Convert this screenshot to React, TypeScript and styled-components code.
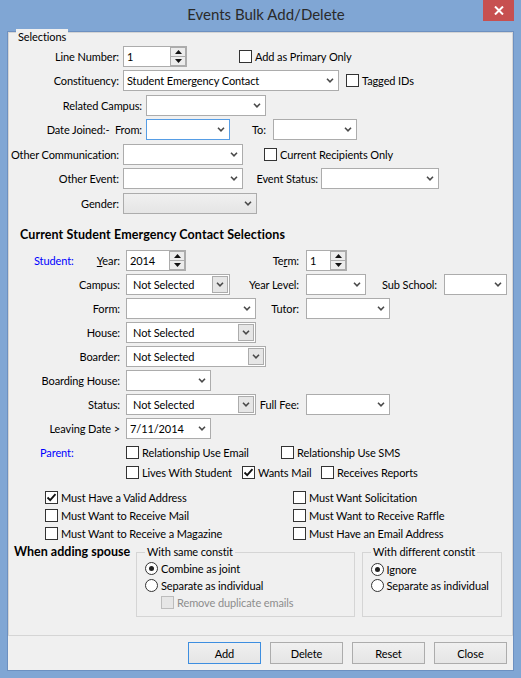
import React from 'react'
import styled, { createGlobalStyle } from 'styled-components'

const GlobalStyle = createGlobalStyle`
  html, body { margin: 0; padding: 0; background: #80a6d4; }
  body { font-family: Lato, "Noto Sans", sans-serif; font-size: 11px; letter-spacing: -0.1px; color: #000; }
  * { box-sizing: border-box; }
`

const Window = styled.div`
  width: 521px;
  height: 678px;
  background: #80a6d4;
  display: flex;
  flex-direction: column;
`

const TitleBar = styled.div`
  position: relative;
  height: 31px;
  flex: none;
  display: flex;
  align-items: center;
  justify-content: center;
  padding: 0 0 3px 11px;
  font-size: 15px;
  letter-spacing: 0;
  color: #2a2a2a;
`

const CloseButton = styled.div`
  position: absolute;
  top: 0;
  right: 7px;
  width: 31px;
  height: 21px;
  background: #c75050;
  display: flex;
  align-items: center;
  justify-content: center;
`

const Client = styled.div`
  flex: 1;
  margin: 0 7px 7px 7px;
  border: 1px solid #6d90c0;
  background: #f0f0f0;
  display: flex;
  flex-direction: column;
`

const GroupBox = styled.div<{ $w?: number; $h: number }>`
  position: relative;
  flex: none;
  width: ${({ $w }) => ($w ? `${$w}px` : 'auto')};
  height: ${({ $h }) => $h}px;
  border: 1px solid #d5d5d5;
`

const Legend = styled.span<{ $top: number; $left: number }>`
  position: absolute;
  top: ${({ $top }) => $top}px;
  left: ${({ $left }) => $left}px;
  padding: 0 2px;
  line-height: 16px;
  background: #f0f0f0;
  white-space: nowrap;
`

const Content = styled.div<{ $pt: number; $pl?: number }>`
  display: flex;
  flex-direction: column;
  padding-top: ${({ $pt }) => $pt}px;
  padding-left: ${({ $pl }) => $pl ?? 0}px;
`

const Row = styled.div<{ $h?: number; $mt?: number; $pl?: number; $top?: boolean }>`
  display: flex;
  align-items: ${({ $top }) => ($top ? 'flex-start' : 'center')};
  flex: none;
  height: ${({ $h }) => $h ?? 24}px;
  margin-top: ${({ $mt }) => $mt ?? 0}px;
  padding-left: ${({ $pl }) => $pl ?? 0}px;
`

const Label = styled.span<{ $w: number; $pr?: number; $pl?: number; $left?: boolean; $color?: string }>`
  flex: none;
  display: flex;
  justify-content: ${({ $left }) => ($left ? 'flex-start' : 'flex-end')};
  width: ${({ $w }) => $w}px;
  padding-right: ${({ $pr }) => $pr ?? 4}px;
  padding-left: ${({ $pl }) => $pl ?? 0}px;
  color: ${({ $color }) => $color ?? '#000'};
  white-space: nowrap;
`

const SplitLabel = styled(Label)`
  justify-content: space-between;
`

const Blue = styled.span`
  color: #0000ff;
`

const SectionTitle = styled.div`
  flex: none;
  margin-top: 12px;
  height: 16px;
  line-height: 16px;
  padding-left: 11px;
  font-size: 12.5px;
  letter-spacing: 0.1px;
  font-weight: bold;
`

const Field = styled.div<{ $w: number; $focus?: boolean; $disabled?: boolean; $pl?: number }>`
  flex: none;
  width: ${({ $w }) => $w}px;
  height: 21px;
  display: flex;
  align-items: center;
  padding-left: ${({ $pl }) => $pl ?? 3}px;
  border: 1px solid ${({ $focus }) => ($focus ? '#569de5' : '#acacac')};
  background: ${({ $disabled }) => ($disabled ? 'linear-gradient(#f0f0f0, #e5e5e5)' : '#fff')};
  white-space: nowrap;
`

const Value = styled.span`
  flex: 1;
  overflow: hidden;
`

const ArrowBox = styled.span<{ $button?: boolean }>`
  flex: none;
  width: ${({ $button }) => ($button ? 16 : 13)}px;
  height: 17px;
  margin-right: ${({ $button }) => ($button ? 1 : 2)}px;
  display: flex;
  align-items: center;
  justify-content: center;
  border: ${({ $button }) => ($button ? '1px solid #acacac' : 'none')};
  background: ${({ $button }) => ($button ? '#e6e6e6' : 'transparent')};
`

const SpinButtons = styled.span`
  flex: none;
  width: 16px;
  height: 19px;
  display: flex;
  flex-direction: column;
`

const SpinButton = styled.span`
  flex: 1;
  display: flex;
  align-items: center;
  justify-content: center;
  border: 1px solid #acacac;
  background: #ececec;
  & + & { border-top: none; }
`

const CheckItem = styled.label<{ $w?: number; $disabled?: boolean }>`
  flex: none;
  display: flex;
  align-items: center;
  gap: 3px;
  width: ${({ $w }) => ($w ? `${$w}px` : 'auto')};
  color: ${({ $disabled }) => ($disabled ? '#8d8d8d' : '#000')};
  white-space: nowrap;
`

const Box = styled.span<{ $disabled?: boolean; $round?: boolean }>`
  flex: none;
  width: 13px;
  height: 13px;
  display: flex;
  align-items: center;
  justify-content: center;
  border: 1px solid ${({ $disabled }) => ($disabled ? '#bcbcbc' : '#333')};
  border-radius: ${({ $round }) => ($round ? '50%' : '0')};
  background: ${({ $disabled }) => ($disabled ? '#e6e6e6' : '#fff')};
`

const Dot = styled.span`
  width: 5px;
  height: 5px;
  border-radius: 50%;
  background: #222;
`

const SpouseRow = styled.div`
  display: flex;
  align-items: flex-start;
  margin-top: 2px;
`

const SpouseTitle = styled.div`
  flex: none;
  width: 127px;
  padding-left: 5px;
  line-height: 16px;
  font-size: 12.5px;
  letter-spacing: 0;
  font-weight: bold;
  white-space: nowrap;
`

const ButtonBar = styled.div`
  display: flex;
  justify-content: flex-end;
  gap: 9px;
  padding: 6px 6px 0 0;
`

const Button = styled.div<{ $default?: boolean }>`
  width: 73px;
  height: 22px;
  display: flex;
  align-items: center;
  justify-content: center;
  border: 1px solid ${({ $default }) => ($default ? '#3d8ee0' : '#acacac')};
  background: linear-gradient(#f0f0f0, #e5e5e5);
`

const Chevron = () => (
  <svg width="8" height="5" viewBox="0 0 8 5">
    <polyline points="1,0.8 4,3.8 7,0.8" fill="none" stroke="#4a4a4a" strokeWidth="1.6" />
  </svg>
)

const Tri = ({ up }: { up?: boolean }) => (
  <svg width="7" height="4" viewBox="0 0 7 4">
    <polygon points={up ? '0,4 7,4 3.5,0' : '0,0 7,0 3.5,4'} fill="#111" />
  </svg>
)

const Tick = () => (
  <svg width="11" height="11" viewBox="0 0 11 11">
    <polyline points="1.5,5.5 4.2,8.2 9.5,2.2" fill="none" stroke="#111" strokeWidth="1.8" />
  </svg>
)

const Combo = ({ w, value, button, focus, disabled }: { w: number; value?: string; button?: boolean; focus?: boolean; disabled?: boolean }) => (
  <Field $w={w} $focus={focus} $disabled={disabled} $pl={button ? 6 : 3}>
    <Value>{value}</Value>
    <ArrowBox $button={button}>
      <Chevron />
    </ArrowBox>
  </Field>
)

const Spin = ({ w, value }: { w: number; value: string }) => (
  <Field $w={w}>
    <Value>{value}</Value>
    <SpinButtons>
      <SpinButton>
        <Tri up />
      </SpinButton>
      <SpinButton>
        <Tri />
      </SpinButton>
    </SpinButtons>
  </Field>
)

const Check = ({ label, checked, w, disabled }: { label: string; checked?: boolean; w?: number; disabled?: boolean }) => (
  <CheckItem $w={w} $disabled={disabled}>
    <Box $disabled={disabled}>{checked && <Tick />}</Box>
    {label}
  </CheckItem>
)

const Radio = ({ label, checked }: { label: string; checked?: boolean }) => (
  <CheckItem>
    <Box $round>{checked && <Dot />}</Box>
    {label}
  </CheckItem>
)

export default function App() {
  return (
    <Window>
      <GlobalStyle />
      <TitleBar>
        Events Bulk Add/Delete
        <CloseButton>
          <svg width="10" height="9" viewBox="0 0 10 9">
            <path d="M1 0.5 L9 8.5 M9 0.5 L1 8.5" stroke="#fff" strokeWidth="2" />
          </svg>
        </CloseButton>
      </TitleBar>
      <Client>
        <GroupBox $h={604}>
          <Legend $top={-4} $left={7}>Selections</Legend>
          <Content $pt={10.75}>
            <Row $h={24.5}>
              <Label $w={114}>Line Number:</Label>
              <Spin w={64} value="1" />
              <Row $h={24.5} $pl={52}>
                <Check label="Add as Primary Only" />
              </Row>
            </Row>
            <Row $h={24.5}>
              <Label $w={114}>Constituency:</Label>
              <Combo w={216} value="Student Emergency Contact" />
              <Row $h={24.5} $pl={7}>
                <Check label="Tagged IDs" />
              </Row>
            </Row>
            <Row $h={24.5}>
              <Label $w={137}>Related Campus:</Label>
              <Combo w={120} />
            </Row>
            <Row $h={24.5}>
              <Label $w={137}>Date Joined:-&nbsp; From:</Label>
              <Combo w={84} focus />
              <Label $w={43} $left $pl={22}>To:</Label>
              <Combo w={84} />
            </Row>
            <Row $h={24.5}>
              <Label $w={114}>Other Communication:</Label>
              <Combo w={120} />
              <Row $h={24.5} $pl={21}>
                <Check label="Current Recipients Only" />
              </Row>
            </Row>
            <Row $h={24.5}>
              <Label $w={114}>Other Event:</Label>
              <Combo w={120} />
              <Label $w={78} $pr={3}>Event Status:</Label>
              <Combo w={118} />
            </Row>
            <Row $h={24.5}>
              <Label $w={114}>Gender:</Label>
              <Combo w={134} disabled />
            </Row>

            <SectionTitle>Current Student Emergency Contact Selections</SectionTitle>

            <Row $mt={4.75}>
              <SplitLabel $w={117} $pr={6} $pl={25}>
                <Blue>Student:</Blue>
                <span>
                  <u>Y</u>ear:
                </span>
              </SplitLabel>
              <Spin w={60} value="2014" />
              <Label $w={120} $pr={7}>
                <span>
                  Te<u>r</u>m:
                </span>
              </Label>
              <Spin w={41} value="1" />
            </Row>
            <Row>
              <Label $w={117} $pr={6}>Campus:</Label>
              <Combo w={104} value="Not Selected" button />
              <Label $w={76} $pr={7}>Year Level:</Label>
              <Combo w={60} />
              <Label $w={78} $pr={7}>Sub School:</Label>
              <Combo w={63} />
            </Row>
            <Row>
              <Label $w={117} $pr={6}>Form:</Label>
              <Combo w={130} />
              <Label $w={50} $pr={7}>Tutor:</Label>
              <Combo w={84} />
            </Row>
            <Row>
              <Label $w={117} $pr={6}>House:</Label>
              <Combo w={130} value="Not Selected" button />
            </Row>
            <Row>
              <Label $w={117} $pr={6}>Boarder:</Label>
              <Combo w={140} value="Not Selected" button />
            </Row>
            <Row>
              <Label $w={117} $pr={6}>Boarding House:</Label>
              <Combo w={85} />
            </Row>
            <Row>
              <Label $w={117} $pr={6}>Status:</Label>
              <Combo w={130} value="Not Selected" button />
              <Label $w={50} $pr={7}>Full Fee:</Label>
              <Combo w={84} />
            </Row>
            <Row>
              <Label $w={117} $pr={6}>Leaving Date &gt;</Label>
              <Combo w={85} value="7/11/2014" />
            </Row>
            <Row>
              <Label $w={117} $left $pl={31} $color="#0000ff">
                Parent:
              </Label>
              <Check w={155} label="Relationship Use Email" />
              <Check label="Relationship Use SMS" />
            </Row>
            <Row $h={16}>
              <Label $w={117} />
              <Check w={116} label="Lives With Student" />
              <Check w={79} label="Wants Mail" checked />
              <Check label="Receives Reports" />
            </Row>

            <Row $h={18} $mt={8} $pl={36}>
              <Check w={248} label="Must Have a Valid Address" checked />
              <Check label="Must Want Solicitation" />
            </Row>
            <Row $h={18} $pl={36}>
              <Check w={248} label="Must Want to Receive Mail" />
              <Check label="Must Want to Receive Raffle" />
            </Row>
            <Row $h={18} $pl={36}>
              <Check w={248} label="Must Want to Receive a Magazine" />
              <Check label="Must Have an Email Address" />
            </Row>

            <SpouseRow>
              <SpouseTitle>When adding spouse</SpouseTitle>
              <Row $h={73} $top>
                <Content $pt={8}>
                  <GroupBox $w={219} $h={65}>
                    <Legend $top={-9} $left={8}>With same constit</Legend>
                    <Content $pt={6.5} $pl={8}>
                      <Row $h={17}>
                        <Radio label="Combine as joint" checked />
                      </Row>
                      <Row $h={17}>
                        <Radio label="Separate as individual" />
                      </Row>
                      <Row $h={17} $pl={16}>
                        <Check label="Remove duplicate emails" disabled />
                      </Row>
                    </Content>
                  </GroupBox>
                </Content>
                <Content $pt={8} $pl={7}>
                  <GroupBox $w={140} $h={65}>
                    <Legend $top={-9} $left={8}>With different constit</Legend>
                    <Content $pt={8} $pl={7.5}>
                      <Row $h={16}>
                        <Radio label="Ignore" checked />
                      </Row>
                      <Row $h={16}>
                        <Radio label="Separate as individual" />
                      </Row>
                    </Content>
                  </GroupBox>
                </Content>
              </Row>
            </SpouseRow>
          </Content>
        </GroupBox>
        <ButtonBar>
          <Button $default>Add</Button>
          <Button>Delete</Button>
          <Button>Reset</Button>
          <Button>Close</Button>
        </ButtonBar>
      </Client>
    </Window>
  )
}
